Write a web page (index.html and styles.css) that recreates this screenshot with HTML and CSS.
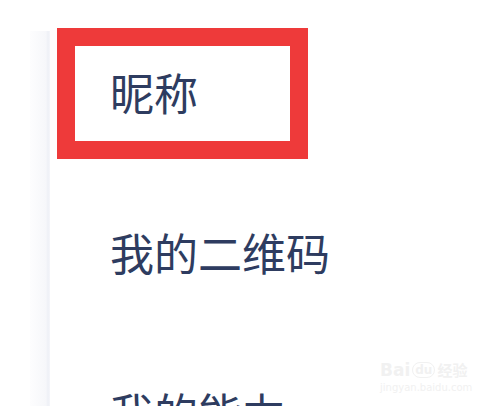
FILE: index.html
```html
<!DOCTYPE html>
<html lang="zh-CN">
<head>
<meta charset="utf-8">
<title>个人信息</title>
<link rel="stylesheet" href="styles.css">
</head>
<body>
<div class="page">
  <div class="strip"></div>
  <ul class="list">
    <li class="row">昵称</li>
    <li class="row">我的二维码</li>
    <li class="row">我的能力</li>
  </ul>
  <div class="mark"></div>
  <div class="watermark">
    <div class="wm-top"><span class="wm-bai">Bai</span><span class="wm-du">du</span><span class="wm-jy">经验</span></div>
    <div class="wm-url">jingyan.baidu.com</div>
  </div>
</div>
</body>
</html>
```

FILE: styles.css
```css
html, body {
  margin: 0;
  padding: 0;
  background: #ffffff;
}
.page {
  position: relative;
  display: flex;
  align-items: stretch;
  height: 406px;
  overflow: hidden;
  font-family: "Noto Sans CJK SC", "Noto Sans", sans-serif;
}
.strip {
  flex: 0 0 20px;
  margin-left: 30px;
  margin-top: 31px;
  background: linear-gradient(to right, #fdfdfe 0%, #f6f7fa 80%, #eef0f6 90%, #f5f6fa 100%);
}
.list {
  list-style: none;
  margin: 0;
  padding: 12px 0 0 60px;
}
.row {
  height: 160px;
  display: flex;
  align-items: center;
  font-size: 44px;
  line-height: 1;
  color: #2e3c60;
  white-space: nowrap;
}
.mark {
  position: absolute;
  left: 57px;
  top: 28px;
  width: 251px;
  height: 131px;
  box-sizing: border-box;
  border: 18px solid #ee3a3a;
}
.watermark {
  position: absolute;
  left: 380px;
  top: 360px;
  color: #f1f1f1;
  font-family: "DejaVu Sans", sans-serif;
}
.wm-top {
  display: flex;
  align-items: center;
  gap: 2px;
  font-size: 17px;
  font-weight: bold;
  line-height: 20px;
}
.wm-du {
  font-size: 12px;
  border: 1px solid #f1f1f1;
  border-radius: 8px;
  padding: 0 2px;
  line-height: 14px;
}
.wm-jy {
  font-family: "Noto Sans CJK SC", sans-serif;
  font-size: 15px;
}
.wm-url {
  font-size: 10px;
  line-height: 14px;
  margin-top: 1px;
}
```
